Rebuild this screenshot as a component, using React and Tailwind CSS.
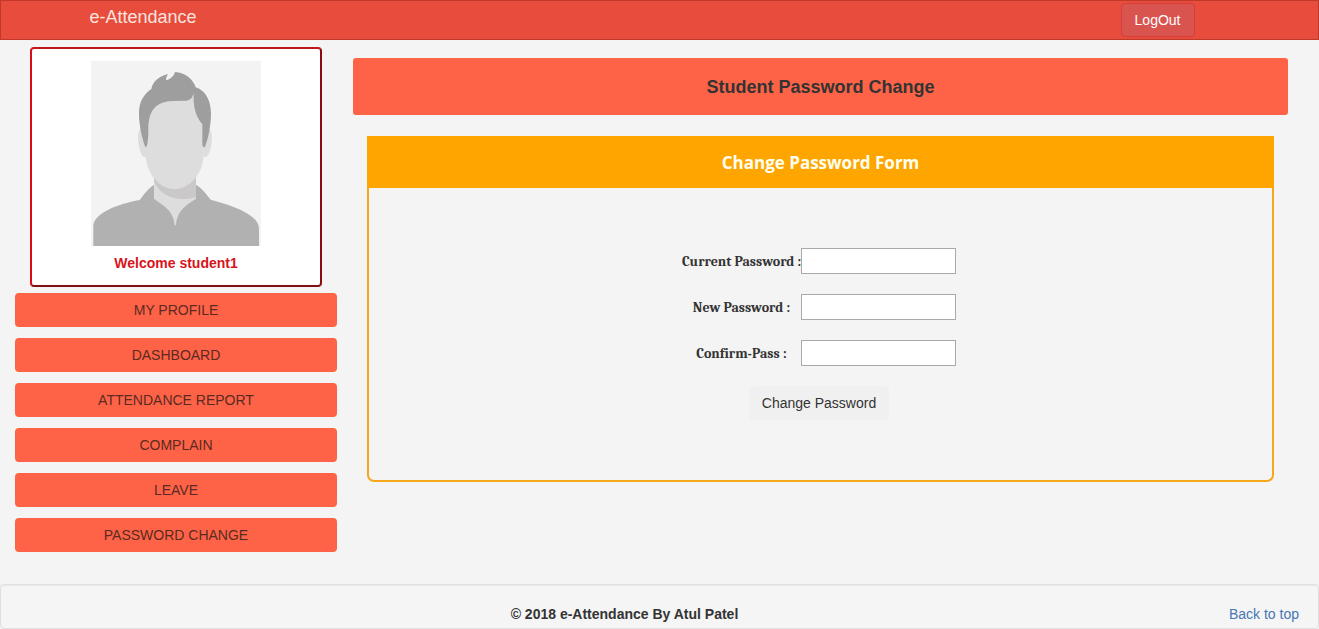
const menuItems = [
  'MY PROFILE',
  'DASHBOARD',
  'ATTENDANCE REPORT',
  'COMPLAIN',
  'LEAVE',
  'PASSWORD CHANGE',
];

const fields = [
  { id: 'current-password', label: 'Current Password :' },
  { id: 'new-password', label: 'New Password :' },
  { id: 'confirm-password', label: 'Confirm-Pass :' },
];

function Avatar() {
  return (
    <svg viewBox="33 33 510 555" className="h-[185px] w-[170px]" role="img" aria-label="Student photo">
      <rect x="33" y="33" width="510" height="555" fill="#f3f3f3" />
      <path
        d="M40 588 L40 530 C40 490 110 463 179 450 C192 433 206 414 222 404 L348 404 C366 414 380 434 393 450 C460 466 537 496 537 535 L537 588 Z"
        fill="#b1b1b1"
      />
      <path
        d="M222 382 L348 382 L348 446 C325 462 291 478 288 526 L284 526 C281 478 245 465 222 446 Z"
        fill="#dddddd"
      />
      <path d="M222 384 L348 384 L348 442 C325 447 312 448 300 447 C260 444 232 420 222 394 Z" fill="#cac8c8" />
      <path
        d="M183 235 C171 240 173 276 178 294 C182 310 187 324 199 321 L199 235 Z M386 235 C399 242 397 276 392 294 C388 310 383 324 370 321 L370 235 Z"
        fill="#dddddd"
      />
      <path
        d="M197 170 L230 110 L330 110 L372 180 L370 325 C366 372 328 418 284 418 C240 418 202 374 198 325 Z"
        fill="#dddddd"
      />
      <path
        d="M197 292 C188 275 176 220 177 188 C177 152 195 130 214 117 C218 93 237 80 264 72 C259 80 257 87 259 91 C269 88 281 80 285 66 C316 67 341 90 347 112 C378 121 393 154 393 192 C393 230 382 275 374 292 C370 293 367 288 367 280 L367 223 C347 200 339 170 341 129 C337 145 329 151 319 152 L278 153 C228 155 205 180 205 240 C205 265 203 290 197 292 Z"
        fill="#9e9e9e"
      />
    </svg>
  );
}

function Sidebar() {
  return (
    <aside className="w-[322px] shrink-0">
      <div className="mx-[15px] flex flex-col items-center rounded border-2 border-t-[#c01818] border-r-[#8f0b0b] border-b-[#821010] border-l-[#d90c14] bg-white pt-3 pb-3">
        <Avatar />
        <p className="mt-2 text-sm leading-[19px] font-bold text-[#d8131b]">Welcome student1</p>
      </div>
      <nav className="mt-[6px] flex flex-col gap-[11px]">
        {menuItems.map((item) => (
          <a
            key={item}
            href="#"
            className="flex h-[34px] items-center justify-center rounded bg-[#ff6347] text-sm text-[#5a2a22]"
          >
            {item}
          </a>
        ))}
      </nav>
    </aside>
  );
}

function PasswordForm() {
  return (
    <section className="mx-[14px] mt-[21px] rounded-b-[7px] border-2 border-t-0 border-[#f5a81c]">
      <h2 className="-mx-[2px] flex h-[52px] items-center justify-center bg-[#ffa500] pt-[2px] font-['Comic_Sans_MS','Open_Sans',sans-serif] text-[17px] font-bold text-[#fffff0]">
        Change Password Form
      </h2>
      <form
        className="flex flex-col items-center gap-5 pt-[60px] pr-[3px] pb-[60px]"
        onSubmit={(event) => event.preventDefault()}
      >
        {fields.map((field) => (
          <div key={field.id} className="flex items-center">
            <label
              htmlFor={field.id}
              className="w-[119px] pt-[2px] text-center font-['Cambria','Liberation_Serif',serif] text-sm font-bold whitespace-nowrap text-[#333333]"
            >
              {field.label}
            </label>
            <input
              id={field.id}
              type="password"
              className="h-[26px] w-[155px] border border-[#a9a9a9] bg-white px-1"
            />
          </div>
        ))}
        <button type="submit" className="h-[34px] rounded bg-[#f0f0f0] px-[13px] text-sm text-[#333333]">
          Change Password
        </button>
      </form>
    </section>
  );
}

export default function App() {
  return (
    <div id="top" className="min-h-screen bg-[#f4f4f4] font-['Liberation_Sans',Arial,sans-serif] text-[#333333]">
      <header className="border border-[#c0392b] bg-[#e74c3c]">
        <div className="mx-auto flex h-[38px] max-w-[1140px] items-center justify-between pr-[35px]">
          <a href="#" className="pb-[6px] text-lg leading-5 text-[#fbe3df]">
            e-Attendance
          </a>
          <button
            type="button"
            className="h-[34px] rounded border border-[#d43f3a] bg-[#d9534f] px-[13px] text-sm text-white"
          >
            LogOut
          </button>
        </div>
      </header>
      <div className="flex gap-4 pt-[7px] pr-[31px] pl-[15px]">
        <Sidebar />
        <main className="min-w-0 flex-1 pt-[11px]">
          <h1 className="flex h-[57px] items-center justify-center rounded-[3px] bg-[#ff6347] text-lg font-bold text-[#333333]">
            Student Password Change
          </h1>
          <PasswordForm />
        </main>
      </div>
      <footer className="mt-8 flex items-center rounded border border-[#e0e0e0] bg-[#f5f5f5] px-[19px] pt-[19px] pb-1 text-sm shadow-[inset_0_1px_1px_rgba(0,0,0,0.05)]">
        <p className="flex-1 text-center font-bold">© 2018 e-Attendance By Atul Patel</p>
        <a href="#top" className="text-[#4577b3]">
          Back to top
        </a>
      </footer>
    </div>
  );
}
